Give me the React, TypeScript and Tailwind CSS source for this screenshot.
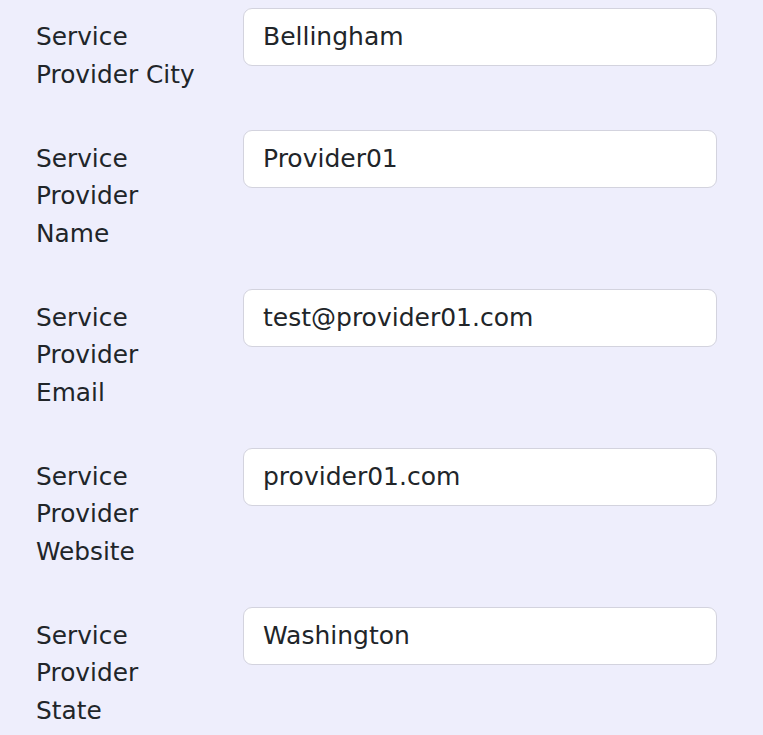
import React from "react";

const rows = [
  { label: "Service Provider City", value: "Bellingham" },
  { label: "Service Provider Name", value: "Provider01" },
  { label: "Service Provider Email", value: "test@provider01.com" },
  { label: "Service Provider Website", value: "provider01.com" },
  { label: "Service Provider State", value: "Washington" },
];

export default function App() {
  return (
    <div
      className="min-h-screen w-full bg-[#eeeefc] pl-[36px] pt-[8px] text-[#212529]"
      style={{ fontFamily: '"DejaVu Sans", sans-serif' }}
    >
      {rows.map((r) => (
        <div key={r.label} className="mb-[36.5px] flex items-start">
          <label className="w-[207px] shrink-0 pr-[39px] pt-[10px] text-[24.8px] leading-[37.5px]">
            {r.label}
          </label>
          <input
            readOnly
            defaultValue={r.value}
            className="h-[58px] w-[474px] rounded-[9px] border-[1.5px] border-[#d3d3de] bg-white pl-[19px] pr-[19px] pb-[1px] text-[25px] leading-[37.5px] text-[#212529] outline-none"
            style={{ fontFamily: '"DejaVu Sans", sans-serif' }}
          />
        </div>
      ))}
    </div>
  );
}
